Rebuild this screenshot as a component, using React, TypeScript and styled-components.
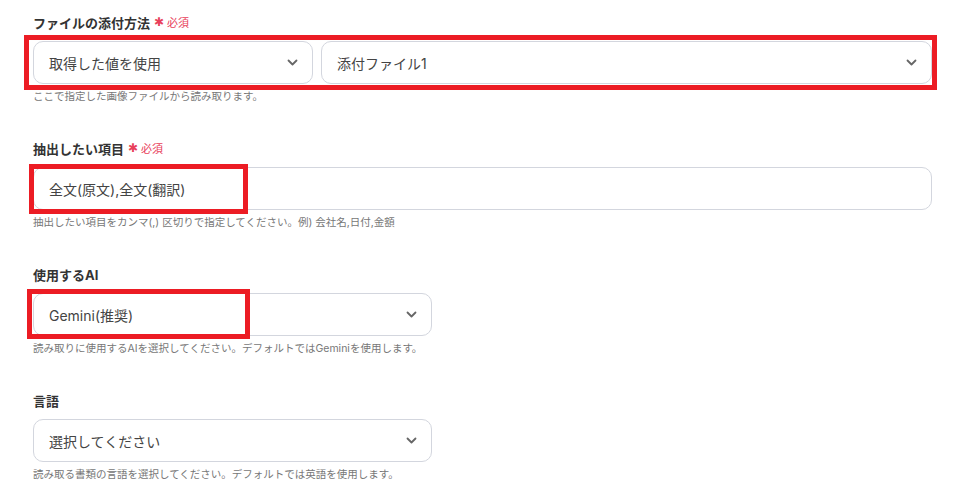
import React from "react";
import styled, { createGlobalStyle } from "styled-components";

const GlobalStyle = createGlobalStyle`
  html, body {
    margin: 0;
    padding: 0;
    background: #fff;
  }
  body {
    font-family: Inter, "Noto Sans CJK JP", sans-serif;
    color: #333;
  }
`;

const Form = styled.div`
  display: flex;
  flex-direction: column;
  gap: 34px;
  padding: 12px 47px 0 33px;
  width: 979px;
  box-sizing: border-box;
`;

const FieldBox = styled.div`
  display: flex;
  flex-direction: column;
`;

const Label = styled.div`
  display: flex;
  align-items: center;
  height: 20px;
  font-size: 13px;
  font-weight: 700;
  color: #333;
  margin-bottom: 9px;
`;

const Star = styled.span`
  color: #e8405a;
  font-family: "DejaVu Sans", sans-serif;
  font-size: 12px;
  margin: 0 3px 0 4px;
  font-weight: 400;
`;

const Required = styled.span`
  color: #e8405a;
  font-size: 11px;
  font-weight: 400;
`;

const Hint = styled.div`
  margin-top: 6px;
  height: 14px;
  line-height: 14px;
  font-size: 10.5px;
  color: #777;
`;

const Control = styled.div`
  position: relative;
`;

const Row = styled.div`
  display: flex;
  gap: 8px;
`;

const Box = styled.div<{ $width?: number }>`
  box-sizing: border-box;
  height: 43px;
  ${(p) => (p.$width ? `width: ${p.$width}px; flex: none;` : "flex: 1;")}
  border: 1px solid #d3d6de;
  border-radius: 10px;
  background: #fff;
  display: flex;
  align-items: center;
  justify-content: space-between;
  padding: 0 14px 0 15px;
  font-size: 14px;
  color: #444;
`;

const Highlight = styled.div<{ $l: number; $t: number; $w: number; $h: number }>`
  position: absolute;
  left: ${(p) => p.$l}px;
  top: ${(p) => p.$t}px;
  width: ${(p) => p.$w}px;
  height: ${(p) => p.$h}px;
  box-sizing: border-box;
  border: 5px solid #ec1c24;
  pointer-events: none;
`;

const Chevron = () => (
  <svg width="11" height="7" viewBox="0 0 11 7" fill="none">
    <path d="M1.5 1.5l4 4 4-4" stroke="#666" strokeWidth="1.8" strokeLinecap="round" strokeLinejoin="round" />
  </svg>
);

const Select: React.FC<{ value: string; width?: number }> = ({ value, width }) => (
  <Box $width={width}>
    <span>{value}</span>
    <Chevron />
  </Box>
);

const Field: React.FC<{ label: string; required?: boolean; hint: string; children: React.ReactNode }> = ({
  label,
  required,
  hint,
  children,
}) => (
  <FieldBox>
    <Label>
      {label}
      {required && (
        <>
          <Star>✱</Star>
          <Required>必須</Required>
        </>
      )}
    </Label>
    {children}
    <Hint>{hint}</Hint>
  </FieldBox>
);

export default function App() {
  return (
    <>
      <GlobalStyle />
      <Form>
        <Field label="ファイルの添付方法" required hint="ここで指定した画像ファイルから読み取ります。">
          <Control>
            <Row>
              <Select value="取得した値を使用" width={280} />
              <Select value="添付ファイル1" />
            </Row>
            <Highlight $l={-9} $t={-6} $w={913} $h={55} />
          </Control>
        </Field>
        <Field label="抽出したい項目" required hint="抽出したい項目をカンマ(,) 区切りで指定してください。例) 会社名,日付,金額">
          <Control>
            <Box>全文(原文),全文(翻訳)</Box>
            <Highlight $l={-4} $t={-3} $w={219} $h={50} />
          </Control>
        </Field>
        <Field label="使用するAI" hint="読み取りに使用するAIを選択してください。デフォルトではGeminiを使用します。">
          <Control>
            <Select value="Gemini(推奨)" width={399} />
            <Highlight $l={-6} $t={-4} $w={223} $h={50} />
          </Control>
        </Field>
        <Field label="言語" hint="読み取る書類の言語を選択してください。デフォルトでは英語を使用します。">
          <Control>
            <Select value="選択してください" width={399} />
          </Control>
        </Field>
      </Form>
    </>
  );
}
